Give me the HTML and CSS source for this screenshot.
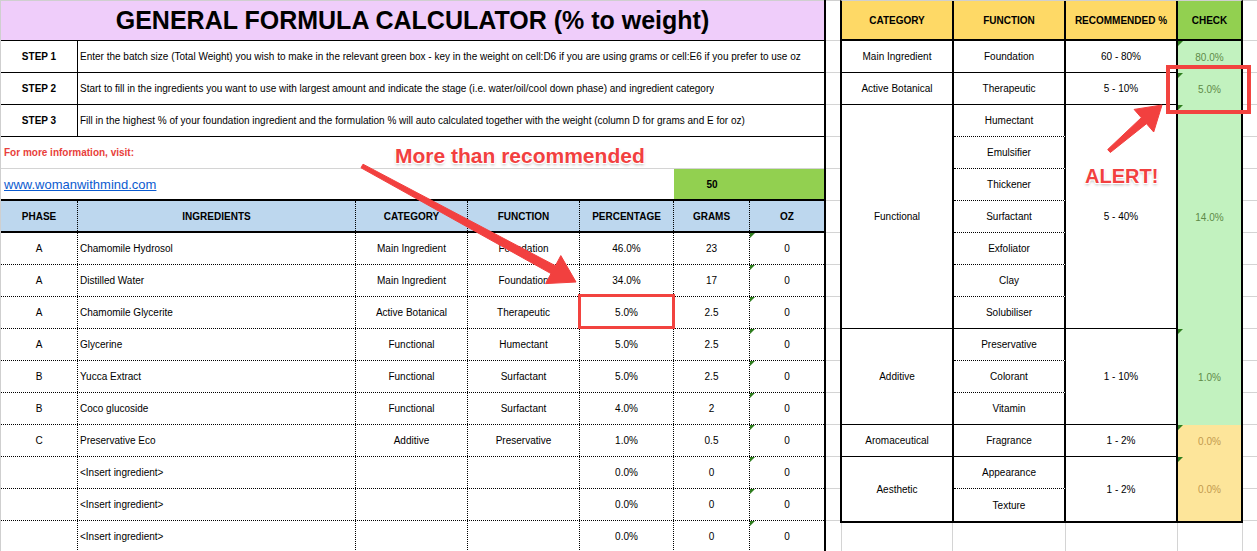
FILE: index.html
```html
<!DOCTYPE html>
<html lang="en">
<head>
    <meta charset="UTF-8">
    <title>General Formula Calculator</title>
    <link rel="stylesheet" href="styles.css">
</head>
<body>
<div class="page">
    <div class="calc">
        <div class="title">GENERAL FORMULA CALCULATOR (% to weight)</div>
        <div class="step">
            <div class="step-no">STEP 1</div>
            <div class="step-text">Enter the batch size (Total Weight) you wish to make in the relevant green box - key in the weight on cell:D6 if you are using grams or cell:E6 if you prefer to use oz</div>
        </div>
        <div class="step">
            <div class="step-no">STEP 2</div>
            <div class="step-text">Start to fill in the ingredients you want to use with largest amount and indicate the stage (i.e. water/oil/cool down phase) and ingredient category</div>
        </div>
        <div class="step">
            <div class="step-no">STEP 3</div>
            <div class="step-text">Fill in the highest % of your foundation ingredient and the formulation % will auto calculated together with the weight (column D for grams and E for oz)</div>
        </div>
        <div class="info">For more information, visit:</div>
        <div class="cols link-row">
            <div class="link-cell"><a class="link" href="#">www.womanwithmind.com</a></div>
            <div class="batch">50</div>
            <div class="batch"></div>
        </div>
        <div class="cols head">
            <div class="c">PHASE</div>
            <div class="c">INGREDIENTS</div>
            <div class="c">CATEGORY</div>
            <div class="c">FUNCTION</div>
            <div class="c">PERCENTAGE</div>
            <div class="c">GRAMS</div>
            <div class="c">OZ</div>
        </div>
        <div class="cols row">
            <div class="c">A</div><div class="c name">Chamomile Hydrosol</div><div class="c">Main Ingredient</div><div class="c">Foundation</div><div class="c">46.0%</div><div class="c">23</div><div class="c flag">0</div>
        </div>
        <div class="cols row">
            <div class="c">A</div><div class="c name">Distilled Water</div><div class="c">Main Ingredient</div><div class="c">Foundation</div><div class="c">34.0%</div><div class="c">17</div><div class="c flag">0</div>
        </div>
        <div class="cols row">
            <div class="c">A</div><div class="c name">Chamomile Glycerite</div><div class="c">Active Botanical</div><div class="c">Therapeutic</div><div class="c">5.0%</div><div class="c">2.5</div><div class="c flag">0</div>
        </div>
        <div class="cols row">
            <div class="c">A</div><div class="c name">Glycerine</div><div class="c">Functional</div><div class="c">Humectant</div><div class="c">5.0%</div><div class="c">2.5</div><div class="c flag">0</div>
        </div>
        <div class="cols row">
            <div class="c">B</div><div class="c name">Yucca Extract</div><div class="c">Functional</div><div class="c">Surfactant</div><div class="c">5.0%</div><div class="c">2.5</div><div class="c flag">0</div>
        </div>
        <div class="cols row">
            <div class="c">B</div><div class="c name">Coco glucoside</div><div class="c">Functional</div><div class="c">Surfactant</div><div class="c">4.0%</div><div class="c">2</div><div class="c flag">0</div>
        </div>
        <div class="cols row">
            <div class="c">C</div><div class="c name">Preservative Eco</div><div class="c">Additive</div><div class="c">Preservative</div><div class="c">1.0%</div><div class="c">0.5</div><div class="c flag">0</div>
        </div>
        <div class="cols row">
            <div class="c"></div><div class="c name">&lt;Insert ingredient&gt;</div><div class="c"></div><div class="c"></div><div class="c">0.0%</div><div class="c">0</div><div class="c flag">0</div>
        </div>
        <div class="cols row">
            <div class="c"></div><div class="c name">&lt;Insert ingredient&gt;</div><div class="c"></div><div class="c"></div><div class="c">0.0%</div><div class="c">0</div><div class="c flag">0</div>
        </div>
        <div class="cols row">
            <div class="c"></div><div class="c name">&lt;Insert ingredient&gt;</div><div class="c"></div><div class="c"></div><div class="c">0.0%</div><div class="c">0</div><div class="c flag">0</div>
        </div>
    </div>

    <div class="filler gap"></div>

    <div class="guide">
        <div class="guide-table">
            <div class="g hd">CATEGORY</div>
            <div class="g hd">FUNCTION</div>
            <div class="g hd">RECOMMENDED %</div>
            <div class="g hd check-hd">CHECK</div>

            <div class="g cat">Main Ingredient</div>
            <div class="g fn end">Foundation</div>
            <div class="g rec">60 - 80%</div>
            <div class="g chk good flag">80.0%</div>

            <div class="g cat">Active Botanical</div>
            <div class="g fn end">Therapeutic</div>
            <div class="g rec">5 - 10%</div>
            <div class="g chk good flag">5.0%</div>

            <div class="g cat span-7">Functional</div>
            <div class="g fn">Humectant</div>
            <div class="g rec span-7">5 - 40%</div>
            <div class="g chk good flag span-7">14.0%</div>
            <div class="g fn">Emulsifier</div>
            <div class="g fn">Thickener</div>
            <div class="g fn">Surfactant</div>
            <div class="g fn">Exfoliator</div>
            <div class="g fn">Clay</div>
            <div class="g fn end">Solubiliser</div>

            <div class="g cat span-3">Additive</div>
            <div class="g fn">Preservative</div>
            <div class="g rec span-3">1 - 10%</div>
            <div class="g chk good flag span-3">1.0%</div>
            <div class="g fn">Colorant</div>
            <div class="g fn end">Vitamin</div>

            <div class="g cat">Aromaceutical</div>
            <div class="g fn end">Fragrance</div>
            <div class="g rec">1 - 2%</div>
            <div class="g chk warn flag">0.0%</div>

            <div class="g cat span-2 last">Aesthetic</div>
            <div class="g fn">Appearance</div>
            <div class="g rec span-2 last">1 - 2%</div>
            <div class="g chk warn flag span-2">0.0%</div>
            <div class="g fn end last">Texture</div>
        </div>
        <div class="guide-below">
            <div class="blank"></div>
            <div class="blank"></div>
            <div class="blank"></div>
            <div class="blank narrow"></div>
        </div>
    </div>

    <div class="filler edge"></div>
</div>

<svg class="marks" width="1257" height="551" viewBox="0 0 1257 551">
    <polygon class="arrow" points="363,164.2 555.4,265.7 560.8,255.6 576,282 545.6,283.6 551,273.6 361,167.8"/>
    <rect class="box" x="579.5" y="295.5" width="94" height="32"/>
    <polygon class="arrow" points="1107.7,149.5 1141.3,117.7 1134.1,109.4 1162,105 1153.7,132 1146.5,123.7 1110.3,152.5"/>
    <rect class="box box-thick" x="1168" y="67" width="81" height="45"/>
</svg>
<div class="note note-more">More than recommended</div>
<div class="note note-alert">ALERT!</div>
</body>
</html>
```

FILE: styles.css
```css
body{
    margin: 0;
    font-family: "Liberation Sans", Arial, sans-serif;
    font-size: 10px;
    color: #000;
    background: #fff;
    overflow: hidden;
}
.page{
    display: flex;
    height: 551px;
}

/* left sheet */
.calc{
    width: 826px;
    flex: none;
    box-sizing: border-box;
    border-left: 1px solid #cfcfcf;
    border-right: 2px solid #000;
    background: #fff;
}
.title{
    height: 41px;
    box-sizing: border-box;
    border-top: 1px solid #cfcfcf;
    border-bottom: 1px solid #000;
    background: #efcdfa;
    font-size: 25px;
    font-weight: bold;
    display: flex;
    align-items: center;
    justify-content: center;
}
.step{
    display: flex;
    height: 32px;
    box-sizing: border-box;
    border-bottom: 1px solid #000;
}
.step-no{
    width: 77px;
    flex: none;
    box-sizing: border-box;
    border-right: 1px solid #000;
    font-weight: bold;
    display: flex;
    align-items: center;
    justify-content: center;
}
.step-text{
    display: flex;
    align-items: center;
    padding-left: 2px;
    white-space: nowrap;
    overflow: hidden;
}
.info{
    height: 32px;
    box-sizing: border-box;
    border-bottom: 1px solid #d4d4d4;
    padding-left: 3px;
    display: flex;
    align-items: center;
    color: #e8403b;
    font-weight: bold;
}
.cols{
    display: grid;
    grid-template-columns: 77px 278px 112px 112px 94px 76px 74px;
}
.link-row{
    height: 30px;
}
.link-cell{
    grid-column: span 5;
    display: flex;
    align-items: center;
    padding-left: 3px;
}
.link{
    color: #0b5bd0;
    font-size: 13px;
}
.batch{
    background: #92d050;
    font-weight: bold;
    display: flex;
    align-items: center;
    justify-content: center;
}
.head{
    height: 34px;
    box-sizing: border-box;
    border-top: 2px solid #000;
    border-bottom: 2px solid #000;
    background: #bdd7ee;
    font-weight: bold;
}
.row{
    height: 32px;
    box-sizing: border-box;
    border-bottom: 1px dotted #000;
}
.c{
    border-right: 1px dotted #000;
    display: flex;
    align-items: center;
    justify-content: center;
    white-space: nowrap;
    position: relative;
}
.c:last-child{
    border-right: 0;
}
.name{
    justify-content: flex-start;
    padding-left: 2px;
}
.flag::before{
    content: "";
    position: absolute;
    left: 0;
    top: 0;
    border-top: 5px solid #2f7d1e;
    border-right: 5px solid transparent;
}

/* grey spreadsheet gridlines */
.filler{
    flex: none;
    box-sizing: border-box;
    border-top: 1px solid #d0d0d0;
    padding-top: 39px;
    background-image: linear-gradient(#d4d4d4 1px, transparent 1px);
    background-size: 100% 32px;
    background-origin: content-box;
    background-clip: content-box;
}
.gap{
    width: 14px;
}
.edge{
    flex: 1;
}

/* right guide table */
.guide{
    width: 403px;
    flex: none;
    display: flex;
    flex-direction: column;
}
.guide-table{
    display: grid;
    grid-template-columns: 112px 112px 112px 63px;
    grid-template-rows: 40px repeat(15, 32px);
    border-top: 1px solid #cfcfcf;
    border-left: 2px solid #000;
    border-right: 2px solid #000;
    border-bottom: 2px solid #000;
}
.g{
    box-sizing: border-box;
    border-right: 2px solid #000;
    display: flex;
    align-items: center;
    justify-content: center;
    white-space: nowrap;
    position: relative;
}
.hd{
    background: #fed966;
    font-weight: bold;
    border-bottom: 2px solid #000;
}
.check-hd{
    background: #92d050;
    border-right: 0;
}
.cat, .rec{
    border-bottom: 1px solid #000;
}
.fn{
    border-bottom: 1px dotted #000;
}
.fn.end{
    border-bottom: 1px solid #000;
}
.last, .fn.end.last{
    border-bottom: 0;
}
.chk{
    border-right: 0;
}
.good{
    background: #c2f2bf;
    color: #5e8a48;
}
.warn{
    background: #fde59a;
    color: #c29a4e;
}
.span-7{
    grid-row: span 7;
}
.span-3{
    grid-row: span 3;
}
.span-2{
    grid-row: span 2;
}
.guide-below{
    flex: 1;
    display: flex;
    margin-left: 1px;
}
.blank{
    width: 112px;
    border-right: 1px solid #d4d4d4;
}
.blank:first-child{
    border-left: 1px solid #d4d4d4;
    width: 111px;
}
.blank.narrow{
    width: 64px;
}

/* annotations */
.marks{
    position: absolute;
    left: 0;
    top: 0;
    pointer-events: none;
}
.arrow{
    fill: #f2403f;
    stroke: #f2403f;
    stroke-width: 1;
    stroke-linejoin: round;
}
.box{
    fill: none;
    stroke: #f2433f;
    stroke-width: 3;
}
.box-thick{
    stroke-width: 4;
}
.note{
    position: absolute;
    color: #f2403f;
    font-weight: bold;
    white-space: nowrap;
    text-shadow: 1px 1px 0 #fff, -1px -1px 0 #fff, 1px -1px 0 #fff, -1px 1px 0 #fff, 0 2px 3px rgba(0,0,0,.3);
}
.note-more{
    left: 395px;
    top: 145px;
    font-size: 21px;
    line-height: 21px;
}
.note-alert{
    left: 1085px;
    top: 166px;
    font-size: 20px;
    line-height: 20px;
}
```
